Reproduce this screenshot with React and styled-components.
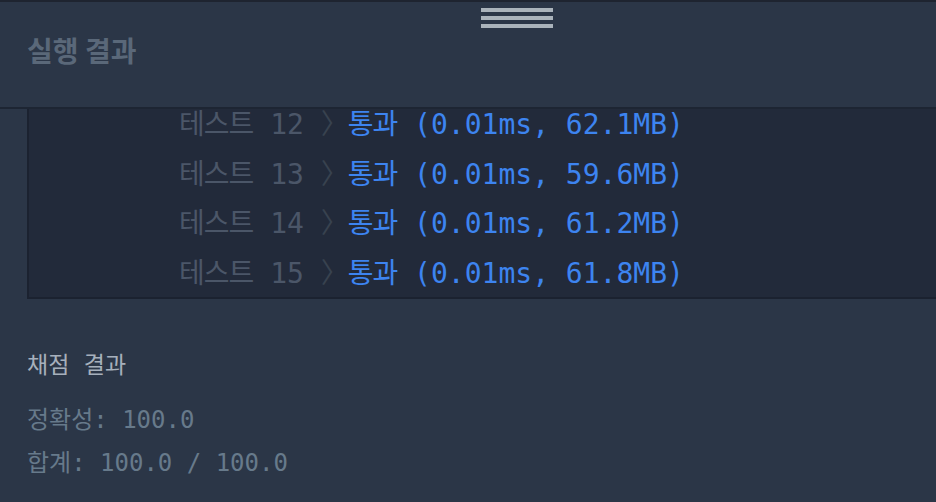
import React from "react";
import styled, { createGlobalStyle } from "styled-components";

const Global = createGlobalStyle`
  html, body { margin: 0; padding: 0; background: #2b3647; }
  #root { width: 936px; height: 502px; overflow: hidden; }
`;

const Page = styled.div`
  display: flex;
  flex-direction: column;
  width: 936px;
  height: 502px;
  background: #2b3647;
  overflow: hidden;
`;

const Header = styled.header`
  flex: none;
  height: 105px;
  border-top: 2px solid #1e2430;
  border-bottom: 2px solid #1d2533;
  background: #2b3647;
  display: flex;
  flex-direction: column;
  align-items: flex-start;
  padding: 0 0 0 27px;
  box-sizing: content-box;
`;

const Handle = styled.div`
  margin: 6px 0 0 454px;
  width: 72px;
  display: flex;
  flex-direction: column;
  gap: 4px;
`;

const HandleBar = styled.span`
  display: block;
  height: 4px;
  background: #aab3bb;
`;

const Title = styled.h2`
  margin: 4px 0 0;
  font-family: "Noto Sans CJK KR", "Noto Sans", sans-serif;
  font-weight: 700;
  font-size: 28px;
  line-height: 36px;
  color: #5a6879;
`;

const Viewport = styled.div`
  flex: 1;
  overflow: hidden;
  display: flex;
  flex-direction: column;
`;

const OutputBox = styled.pre`
  margin: -13px -40px 0 27px;
  padding: 0 0 0 150px;
  background: #222a3a;
  border: 2px solid #1b2230;
  font-family: "DejaVu Sans Mono", "Noto Sans CJK KR", monospace;
  font-size: 28px;
  white-space: pre;
`;

const Row = styled.div`
  height: 49.67px;
  line-height: 49.67px;
`;

const Ko = styled.span`
  font-family: "Noto Sans CJK KR", sans-serif;
  font-size: ${(p) => p.$size || 24}px;
  letter-spacing: ${(p) => p.$track || 0}px;
`;

const Label = styled.span`
  color: #4b5668;
`;

const Sep = styled.span`
  display: inline-block;
  width: 27px;
  color: #38424f;
`;

const Pass = styled.span`
  color: #3d84f0;
`;

const Result = styled.section`
  margin: 49px 0 0 27px;
  font-family: "DejaVu Sans Mono", "Noto Sans CJK KR", monospace;
  font-size: 24px;
  white-space: pre;
`;

const ResultTitle = styled.div`
  line-height: 30px;
  color: #a6b0bc;
  margin-bottom: 23px;
`;

const ScoreList = styled.div`
  display: flex;
  flex-direction: column;
  gap: 11px;
`;

const Score = styled.div`
  line-height: 30px;
  color: #677a8b;
`;

const tests = [
  { n: 12, time: "0.01ms", mem: "62.1MB" },
  { n: 13, time: "0.01ms", mem: "59.6MB" },
  { n: 14, time: "0.01ms", mem: "61.2MB" },
  { n: 15, time: "0.01ms", mem: "61.8MB" },
];

export default function App() {
  return (
    <>
      <Global />
      <Page>
        <Header>
          <Handle>
            <HandleBar />
            <HandleBar />
            <HandleBar />
          </Handle>
          <Title>실행 결과</Title>
        </Header>
        <Viewport>
          <OutputBox>
            {tests.map((t) => (
              <Row key={t.n}>
                <Label>
                  <Ko $size={28} $track={-1}>테스트</Ko> {t.n}
                </Label>{" "}
                <Sep>
                  <Ko $size={28} $track={-1}>〉</Ko>
                </Sep>
                <Pass>
                  <Ko $size={28} $track={-1}>통과</Ko> ({t.time}, {t.mem})
                </Pass>
              </Row>
            ))}
          </OutputBox>
          <Result>
            <ResultTitle>
              <Ko $size={23}>채점</Ko> <Ko $size={23}>결과</Ko>
            </ResultTitle>
            <ScoreList>
              <Score>
                <Ko $size={24}>정확성</Ko>: 100.0
              </Score>
              <Score>
                <Ko $size={24}>합계</Ko>: 100.0 / 100.0
              </Score>
            </ScoreList>
          </Result>
        </Viewport>
      </Page>
    </>
  );
}
